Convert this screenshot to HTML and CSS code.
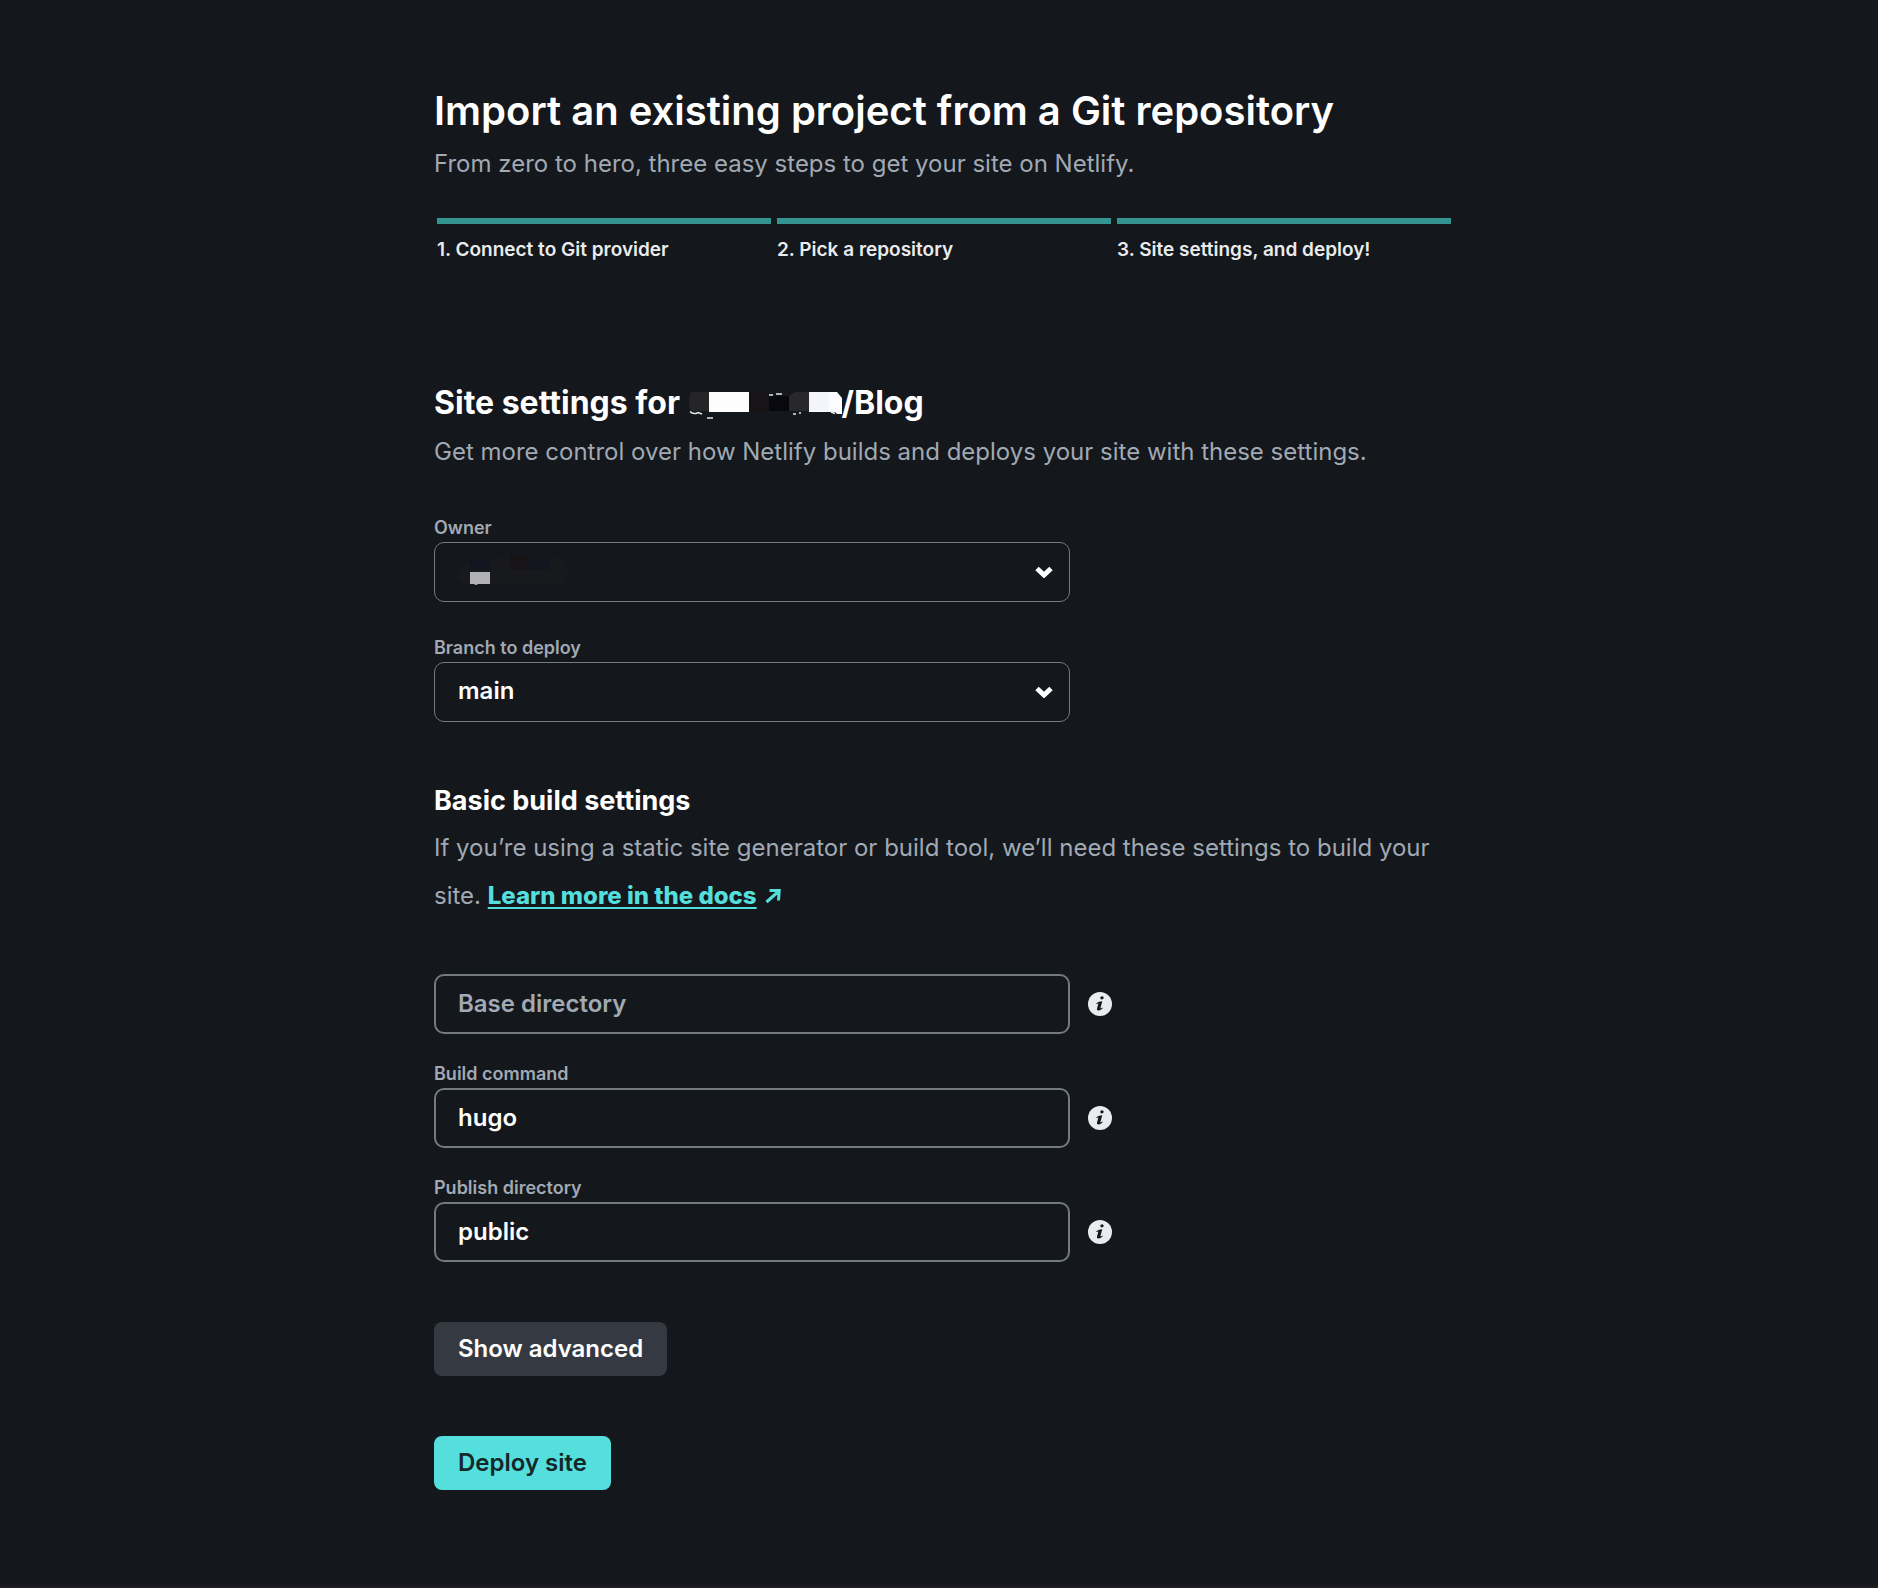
FILE: index.html
```html
<!DOCTYPE html>
<html lang="en">
<head>
<meta charset="utf-8">
<meta name="viewport" content="width=device-width, initial-scale=1">
<title>Import an existing project</title>
<link rel="stylesheet" href="styles.css">
</head>
<body>
<main class="page">
  <header class="intro">
    <h1 class="title">Import an existing project from a Git repository</h1>
    <p class="text">From zero to hero, three easy steps to get your site on Netlify.</p>
    <ol class="steps">
      <li class="step">1. Connect to Git provider</li>
      <li class="step">2. Pick a repository</li>
      <li class="step">3. Site settings, and deploy!</li>
    </ol>
  </header>

  <form class="settings">
    <section class="section">
      <h2 class="subtitle">Site settings for <svg class="redacted-name" width="154" height="32" viewBox="5 0 154 32" aria-hidden="true">
        <path d="M8 5h18v19H8q-4-8 0-19z" fill="#252527"/>
        <path d="M26 5h40v20H26z" fill="#fdfdfd"/>
        <path d="M66 5h20v20H66z" fill="#171417"/>
        <path d="M86 9h20v15H86z" fill="#08090e"/>
        <path d="M106 9l6-4h14v19h-20z" fill="#28282c"/>
        <path d="M126 5h28l5 6v16h-5l-2-2h-26z" fill="#fbfcff"/>
        <path d="M126 5h20v19h-20z" fill="#f3f5fb"/>
        <path d="M7 24.500q2 2.500 6 2l2-1 4 1.500M24 31h6M86 8h4M93 7h6M110 27h3M116 26h2M148 25l4 1.500" fill="none" stroke="#e6e6e8" stroke-width="1.500"/>
      </svg>/Blog</h2>
      <p class="text">Get more control over how Netlify builds and deploys your site with these settings.</p>
      <div class="selects">
        <div class="field">
          <label class="label" for="owner">Owner</label>
          <div class="control">
            <select class="input select" id="owner"><option></option></select>
            <svg class="redacted-owner" width="114" height="32" viewBox="0 0 114 32" aria-hidden="true">
              <path d="M14 9Q60-3 104 4q8 4 6 12 6 8-3 14H16Q0 30 1 18q3-8 13-9z" fill="#17191c"/>
              <path d="M14 8l20-5v13H14z" fill="#131620"/>
              <path d="M54 2h20v14H54z" fill="#171417"/>
              <path d="M74 2h20v14H74z" fill="#13161f"/>
              <path d="M14 18h20v12H22q-2 2-4 0h-4z" fill="#b0b0b5"/>
            </svg>
            <svg class="chevron" width="18" height="12" viewBox="0 0 18 12" aria-hidden="true"><path d="M2 2.500l7 6.500 7-6.500"/></svg>
          </div>
        </div>
        <div class="field">
          <label class="label" for="branch">Branch to deploy</label>
          <div class="control">
            <select class="input select" id="branch"><option>main</option></select>
            <svg class="chevron" width="18" height="12" viewBox="0 0 18 12" aria-hidden="true"><path d="M2 2.500l7 6.500 7-6.500"/></svg>
          </div>
        </div>
      </div>
    </section>

    <section class="section">
      <h3 class="heading">Basic build settings</h3>
      <p class="text">If you’re using a static site generator or build tool, we’ll need these settings to build your site. <a class="link" href="#docs">Learn more in the docs</a> <svg class="arrow" width="16" height="15" viewBox="0 0 16 15" aria-hidden="true"><path d="M1.500 13L14 2M4.500 1.500H14.200L13.500 11.500"/></svg></p>
      <div class="inputs">
        <div class="row">
          <input class="input" type="text" placeholder="Base directory" aria-label="Base directory">
          <svg class="info" width="24" height="24" viewBox="0 0 24 24" aria-hidden="true"><circle cx="12" cy="12" r="12"/><path d="M12.800 4.800a1.700 1.500 0 1 1 1.700 2.500a1.700 1.500 0 0 1-1.700-2.500zM8.300 11.200q2.500-1.800 6-2l-2 7.300q1 0 2.300-1l.2.800q-2.300 2.400-4.500 2.300-1.800-.2-1.300-2l1.400-5q-.8 0-1.900.5z"/></svg>
        </div>
        <div class="field">
          <label class="label" for="command">Build command</label>
          <div class="row">
            <input class="input" id="command" type="text" value="hugo">
            <svg class="info" width="24" height="24" viewBox="0 0 24 24" aria-hidden="true"><circle cx="12" cy="12" r="12"/><path d="M12.800 4.800a1.700 1.500 0 1 1 1.700 2.500a1.700 1.500 0 0 1-1.700-2.500zM8.300 11.200q2.500-1.800 6-2l-2 7.300q1 0 2.300-1l.2.800q-2.300 2.400-4.500 2.300-1.800-.2-1.300-2l1.400-5q-.8 0-1.900.5z"/></svg>
          </div>
        </div>
        <div class="field">
          <label class="label" for="publish">Publish directory</label>
          <div class="row">
            <input class="input" id="publish" type="text" value="public">
            <svg class="info" width="24" height="24" viewBox="0 0 24 24" aria-hidden="true"><circle cx="12" cy="12" r="12"/><path d="M12.800 4.800a1.700 1.500 0 1 1 1.700 2.500a1.700 1.500 0 0 1-1.700-2.500zM8.300 11.200q2.500-1.800 6-2l-2 7.300q1 0 2.300-1l.2.800q-2.300 2.400-4.500 2.300-1.800-.2-1.300-2l1.400-5q-.8 0-1.900.5z"/></svg>
          </div>
        </div>
      </div>
    </section>

    <div class="actions">
      <button class="button" type="button">Show advanced</button>
      <button class="button primary" type="submit">Deploy site</button>
    </div>
  </form>
</main>
</body>
</html>
```
FILE: styles.css
```css
* {
  box-sizing: border-box;
}

body {
  margin: 0;
  background: #14171b;
  color: #fff;
  font-family: Inter, "Liberation Sans", sans-serif;
}

h1, h2, h3, p, ol {
  margin: 0;
  padding: 0;
}

.page {
  padding: 86px 24px 96px 34px;
  border-bottom: 2px solid #1e1f25;
}

.intro,
.settings {
  max-width: 1020px;
  margin: 0 auto;
}

.title {
  font-size: 40px;
  line-height: 50px;
  font-weight: 600;
}

.subtitle {
  font-size: 32px;
  line-height: 42px;
  font-weight: 700;
}

.heading {
  font-size: 27px;
  line-height: 38px;
  font-weight: 700;
}

.text {
  margin-top: 4px;
  color: #a0a9b4;
  font-size: 24px;
  line-height: 48px;
}

.steps {
  display: grid;
  grid-template-columns: repeat(3, 1fr);
  gap: 6px;
  margin: 30px 3px 120px;
  list-style: none;
}

.step {
  padding-top: 14px;
  border-top: 6px solid #339492;
  color: #e9ebed;
  font-size: 19px;
  line-height: 24px;
  font-weight: 600;
}

.redacted-name {
  vertical-align: -5px;
}

.selects,
.inputs {
  display: flex;
  flex-direction: column;
  max-width: 636px;
}

.selects {
  gap: 34px;
  margin-top: 40px;
}

.section + .section {
  margin-top: 60px;
}

.inputs {
  gap: 28px;
  max-width: 678px;
  margin-top: 54px;
}

.field {
  display: flex;
  flex-direction: column;
  gap: 2px;
}

.label {
  color: #a0a9b4;
  font-size: 18px;
  line-height: 24px;
  font-weight: 600;
}

.control {
  position: relative;
}

.row {
  display: flex;
  align-items: center;
  gap: 18px;
}

.input {
  width: 100%;
  height: 60px;
  padding: 0 22px 2px;
  border: 2px solid #737a82;
  border-radius: 10px;
  background: #14171b;
  color: #fff;
  font: 600 24px/30px Inter, "Liberation Sans", sans-serif;
}

.input::placeholder {
  color: #a0a9b4;
  opacity: 1;
}

.select {
  border-width: 1px;
  padding-left: 23px;
  appearance: none;
}

.chevron {
  position: absolute;
  top: 24px;
  right: 17px;
  fill: none;
  stroke: #fff;
  stroke-width: 5;
  pointer-events: none;
}

.redacted-owner {
  position: absolute;
  top: 12px;
  left: 22px;
  pointer-events: none;
}

.link {
  color: #54dedc;
  font-weight: 800;
  text-decoration-thickness: 2px;
  text-underline-offset: 3px;
}

.arrow {
  margin-left: 2px;
  fill: none;
  stroke: #54dedc;
  stroke-width: 3;
}

.info {
  flex: none;
}

.info circle {
  fill: #e9ebef;
}

.info path {
  fill: #14171b;
}

.actions {
  display: flex;
  flex-direction: column;
  align-items: flex-start;
  gap: 60px;
  margin-top: 60px;
}

.button {
  height: 54px;
  padding: 0 24px;
  border: 0;
  border-radius: 8px;
  background: #353a42;
  color: #fff;
  font: 600 24px/30px Inter, "Liberation Sans", sans-serif;
}

.primary {
  background: #54dedc;
  color: #14282b;
}
```
